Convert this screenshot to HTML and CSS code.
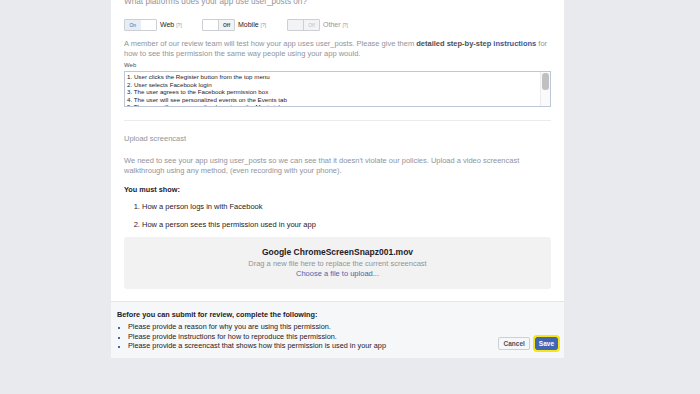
FILE: index.html
```html
<!DOCTYPE html>
<html lang="en">
<head>
<meta charset="UTF-8" />
<title>Permission review</title>
<link rel="stylesheet" href="styles.css">
</head>
<body>
  <div class="panel">
    <div class="content">
      <div class="question">What platforms does your app use user_posts on?</div>

      <div class="platforms">
        <div class="platform">
          <span class="toggle on"><span class="half label">On</span><span class="half"></span></span>
          <span class="pname">Web <small>[?]</small></span>
        </div>
        <div class="platform">
          <span class="toggle off"><span class="half"></span><span class="half label">Off</span></span>
          <span class="pname">Mobile <small>[?]</small></span>
        </div>
        <div class="platform disabled">
          <span class="toggle off"><span class="half"></span><span class="half label">Off</span></span>
          <span class="pname">Other <small>[?]</small></span>
        </div>
      </div>

      <p class="hint">A member of our review team will test how your app uses user_posts. Please give them <strong>detailed step-by-step</strong> <a href="#">instructions</a> for how to see this permission the same way people using your app would.</p>

      <div class="field-label">Web</div>
      <div class="steps">
        <div class="steps-text">
          1. User clicks the Register button from the top menu<br>
          2. User selects Facebook login<br>
          3. The user agrees to the Facebook permission box<br>
          4. The user will see personalized events on the Events tab<br>
          5. The user will see personalized music on the Music tab
        </div>
        <div class="scroll"><div class="thumb"></div></div>
      </div>

      <hr class="sep">

      <div class="section-title">Upload screencast</div>
      <p class="hint">We need to see your app using user_posts so we can see that it doesn't violate our policies. Upload a video screencast walkthrough using any method, (even recording with your phone).</p>

      <div class="must">You must show:</div>
      <ol class="show-list">
        <li>How a person logs in with Facebook</li>
        <li>How a person sees this permission used in your app</li>
      </ol>

      <div class="upload">
        <div class="filename">Google ChromeScreenSnapz001.mov</div>
        <div class="drag">Drag a new file here to replace the current screencast</div>
        <a href="#" class="choose">Choose a file to upload...</a>
      </div>
    </div>

    <div class="footer">
      <div class="todo">
        <div class="todo-title">Before you can submit for review, complete the following:</div>
        <ul>
          <li>Please provide a reason for why you are using this permission.</li>
          <li>Please provide instructions for how to reproduce this permission.</li>
          <li>Please provide a screencast that shows how this permission is used in your app</li>
        </ul>
      </div>
      <div class="buttons">
        <button class="btn">Cancel</button>
        <button class="btn primary">Save</button>
      </div>
    </div>
  </div>
</body>
</html>
```

FILE: styles.css
```css
body {
  margin: 0;
  background: #e9eaed;
  font-family: "Liberation Sans", Arial, sans-serif;
  color: #1d2129;
}
.panel {
  width: 453px;
  margin-left: 111px;
  margin-top: -3px;
  background: #fff;
}
.content {
  padding: 0 13px 12px 13px;
}
.question {
  font-size: 8.2px;
  line-height: 10px;
  color: #90949c;
}
.platforms {
  display: flex;
  margin-top: 12px;
  height: 11px;
}
.platform {
  display: flex;
  align-items: center;
  width: 78px;
}
.platform:nth-child(2) {
  width: 85px;
}
.toggle {
  display: flex;
  width: 31px;
  height: 10px;
  border: 1px solid #ccd0d5;
  border-radius: 1px;
  margin-right: 3px;
}
.toggle .half {
  flex: 1;
  font-size: 5px;
  line-height: 10px;
  text-align: center;
  background: #fff;
}
.toggle.on .label {
  background: #e7ecf5;
  color: #4267b2;
}
.toggle.off .label {
  background: #f2f3f5;
  color: #4b4f56;
  font-weight: bold;
  border-left: 1px solid #ccd0d5;
}
.pname {
  font-size: 7px;
  color: #1d2129;
}
.pname small {
  font-size: 5px;
  color: #90949c;
}
.platform.disabled .toggle .half {
  background: #f2f3f5;
}
.platform.disabled .toggle .label {
  color: #bec2c9;
  font-weight: normal;
}
.platform.disabled .pname {
  color: #90949c;
}
.hint {
  font-size: 7.5px;
  line-height: 10px;
  color: #90949c;
  margin: 9px 0 0 0;
}
.hint strong {
  color: #4b4f56;
}
.hint a {
  color: #365899;
  font-weight: bold;
  text-decoration: none;
}
.field-label {
  font-size: 6px;
  line-height: 8px;
  margin-top: 2px;
  color: #4b4f56;
}
.steps {
  display: flex;
  height: 34px;
  margin-top: 2px;
  border: 1px solid #bdc7d8;
  overflow: hidden;
}
.steps-text {
  flex: 1;
  font-size: 6.2px;
  line-height: 7.6px;
  padding: 1px 2px;
  color: #1d2129;
}
.scroll {
  width: 7px;
  border-left: 1px solid #e9ebee;
  background: #fafafa;
  padding: 1px 1px;
}
.thumb {
  height: 17px;
  border-radius: 3px;
  background: #c1c1c1;
}
.sep {
  border: 0;
  border-top: 1px solid #e9ebee;
  margin: 13px 0 0 0;
}
.section-title {
  font-size: 7.5px;
  line-height: 10px;
  color: #90949c;
  margin-top: 13px;
}
.section-title + .hint {
  margin-top: 12px;
}
.must {
  font-size: 7.3px;
  line-height: 10px;
  font-weight: bold;
  margin-top: 9px;
}
.show-list {
  margin: 7px 0 0 0;
  padding-left: 18px;
  font-size: 7.5px;
  line-height: 10px;
}
.show-list li + li {
  margin-top: 8px;
}
.upload {
  margin-top: 7px;
  background: #f2f2f2;
  border-radius: 3px;
  height: 52px;
  text-align: center;
  padding-top: 10px;
  box-sizing: border-box;
}
.filename {
  font-size: 8.5px;
  line-height: 11px;
  font-weight: bold;
}
.drag {
  font-size: 7.5px;
  line-height: 9.5px;
  color: #90949c;
  margin-top: 1px;
}
.choose {
  display: block;
  font-size: 7.5px;
  line-height: 9.5px;
  color: #4267b2;
  text-decoration: none;
}
.footer {
  display: flex;
  justify-content: space-between;
  align-items: flex-end;
  background: #f6f7f9;
  border-top: 1px solid #e5e5e5;
  padding: 8px 6px 7px 6px;
}
.todo-title {
  font-size: 7.3px;
  line-height: 10px;
  font-weight: bold;
}
.todo ul {
  margin: 2px 0 0 0;
  padding-left: 11px;
  list-style: square;
  font-size: 7.3px;
  line-height: 9.6px;
  color: #1d2129;
}
.todo li::marker {
  color: #4267b2;
  font-size: 5px;
}
.buttons {
  display: flex;
  align-items: center;
  gap: 5px;
  margin-bottom: 1px;
}
.btn {
  font-family: "Liberation Sans", Arial, sans-serif;
  font-size: 6.5px;
  font-weight: bold;
  height: 13px;
  padding: 0 4px;
  border: 1px solid #ccd0d5;
  border-radius: 2px;
  background: #f6f7f9;
  color: #4b4f56;
}
.btn.primary {
  background: #4267b2;
  border: 1px solid #4267b2;
  color: #fff;
  outline: 2px solid #f5e61a;
  outline-offset: 0;
  padding: 0 3px;
}
```
